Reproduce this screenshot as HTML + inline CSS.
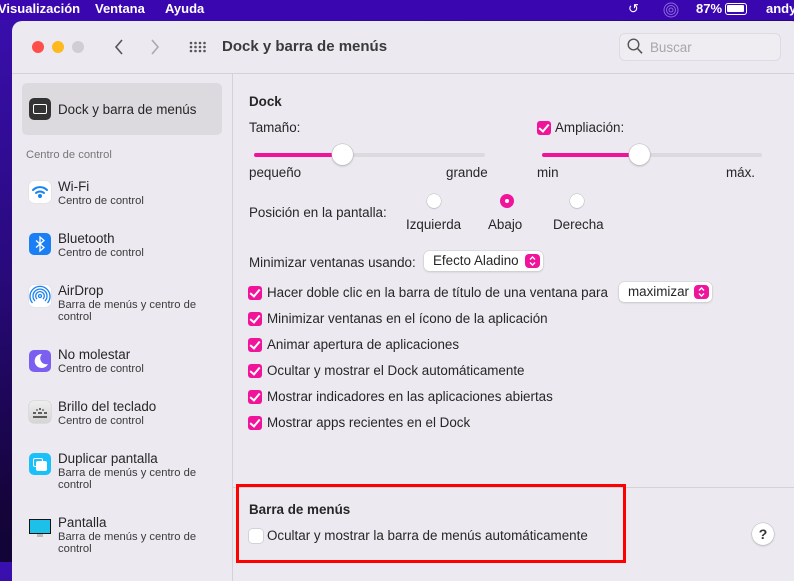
<!DOCTYPE html>
<html><head><meta charset="utf-8"><style>
*{margin:0;padding:0;box-sizing:border-box}
body{width:794px;height:562px;overflow:hidden;position:relative;font-family:"Liberation Sans",sans-serif;font-size:13.4px;color:#262626;background:linear-gradient(160deg,#3a0fb0 0%,#2a0a80 30%,#14043a 60%,#0a0220 100%)}
.a{position:absolute;white-space:nowrap}
.menubar{position:absolute;left:0;top:0;width:794px;height:20px;background:#3a06b0;color:#fff;font-size:13px;font-weight:bold}
.win{position:absolute;left:12px;top:21px;width:790px;height:560px;background:#ece9f0;border-radius:10px 10px 0 0;overflow:hidden}
.cb{position:absolute;width:14px;height:14px;border-radius:3px;background:#f0149a}
.cb::after{content:"";position:absolute;left:4px;top:1px;width:4px;height:8px;border:solid #fff;border-width:0 2px 2px 0;transform:rotate(40deg)}
.ic{position:absolute;left:17px;width:22px;height:22px;border-radius:5px}
.t1{position:absolute;left:46px;font-size:13.4px;color:#262626}
.t2{position:absolute;left:46px;font-size:11.2px;color:#3a3a3a;line-height:12px}
.pop{position:absolute;height:20px;background:#fff;border-radius:5px;box-shadow:0 0 0 .5px #ccc,0 1px 2px rgba(0,0,0,.15);padding:0 0 0 9px;line-height:20px}
.pop i{position:absolute;right:3px;top:3px;width:15px;height:14px;background:#f0149a;border-radius:4px}
.radio{position:absolute;width:14px;height:14px;border-radius:50%;background:#fff;box-shadow:0 0 0 .5px #bbb,0 1px 1px rgba(0,0,0,.15)}
</style></head><body>
<div class="menubar">
<span class="a" style="left:-2px;top:1px">Visualización</span>
<span class="a" style="left:95px;top:1px">Ventana</span>
<span class="a" style="left:165px;top:1px">Ayuda</span>
<span class="a" style="left:628px;top:1px;font-weight:normal">&#8634;</span>
<svg class="a" style="left:663px;top:2px" width="16" height="16" viewBox="0 0 16 16" fill="none" stroke="#8a6ad8" stroke-width="1"><circle cx="8" cy="8" r="2"/><circle cx="8" cy="8" r="4.5"/><circle cx="8" cy="8" r="7"/></svg>
<span class="a" style="left:696px;top:1px">87%</span>
<span class="a" style="left:725px;top:3px;width:22px;height:12px;border:1.5px solid #fff;border-radius:3px"><span style="position:absolute;left:1px;top:1px;width:17px;height:7px;background:#fff;border-radius:1px"></span></span>
<span class="a" style="left:766px;top:1px">andy</span>
</div>
<div class="win">
<div class="a" style="left:20px;top:20px;width:12px;height:12px;border-radius:50%;background:#fe4f4b"></div>
<div class="a" style="left:40px;top:20px;width:12px;height:12px;border-radius:50%;background:#fdb91e"></div>
<div class="a" style="left:60px;top:20px;width:12px;height:12px;border-radius:50%;background:#d0ced4"></div>
<svg class="a" style="left:102px;top:18px" width="10" height="16" viewBox="0 0 10 16"><path d="M8 1L2 8l6 7" fill="none" stroke="#555" stroke-width="1.6"/></svg>
<svg class="a" style="left:138px;top:18px" width="10" height="16" viewBox="0 0 10 16"><path d="M2 1l6 7-6 7" fill="none" stroke="#aaa" stroke-width="1.6"/></svg>
<svg class="a" style="left:177px;top:20px" width="18" height="12" viewBox="0 0 18 12" fill="#555"><circle cx="2" cy="2" r="1.3"/><circle cx="6.5" cy="2" r="1.3"/><circle cx="11" cy="2" r="1.3"/><circle cx="15.5" cy="2" r="1.3"/><circle cx="2" cy="6" r="1.3"/><circle cx="6.5" cy="6" r="1.3"/><circle cx="11" cy="6" r="1.3"/><circle cx="15.5" cy="6" r="1.3"/><circle cx="2" cy="10" r="1.3"/><circle cx="6.5" cy="10" r="1.3"/><circle cx="11" cy="10" r="1.3"/><circle cx="15.5" cy="10" r="1.3"/></svg>
<span class="a" style="left:210px;top:17px;font-size:15px;font-weight:bold;color:#3a3a3a">Dock y barra de menús</span>
<div class="a" style="left:607px;top:12px;width:162px;height:28px;border:1px solid #dedbe2;border-radius:6px;background:#efecf2"></div>
<svg class="a" style="left:615px;top:17px" width="16" height="17" viewBox="0 0 16 17"><circle cx="6.5" cy="6.5" r="5.3" fill="none" stroke="#555" stroke-width="1.4"/><path d="M10.5 10.5l4.5 4.8" stroke="#555" stroke-width="1.6"/></svg>
<span class="a" style="left:638px;top:19px;color:#a8a6ab">Buscar</span>
<div class="a" style="left:0;top:52px;width:790px;height:1px;background:#d4d1d8"></div>
<div class="a" style="left:220px;top:53px;width:1px;height:510px;background:#d4d1d8"></div>
<div class="a" style="left:10px;top:62px;width:200px;height:52px;background:#dcdadf;border-radius:5px"></div>
<div class="ic" style="top:77px;background:#333;left:17px"><div style="position:absolute;left:4px;top:6px;width:14px;height:10px;border:1.5px solid #fff;border-radius:2px"></div></div>
<span class="t1" style="top:81px">Dock y barra de menús</span>
<span class="a" style="left:14px;top:128px;font-size:11.2px;color:#777">Centro de control</span>

<div class="ic" style="top:160px;background:#fff;box-shadow:0 0 0 .5px #ddd"><svg width="22" height="22" viewBox="0 0 22 22" fill="none" stroke="#1a82f0" stroke-width="2" stroke-linecap="round"><path d="M4 9a10 10 0 0 1 14 0"/><path d="M7 12a6 6 0 0 1 8 0"/><circle cx="11" cy="15" r="1" fill="#1a82f0"/></svg></div>
<span class="t1" style="top:158px">Wi-Fi</span><span class="t2" style="top:174px">Centro de control</span>

<div class="ic" style="top:212px;background:#1a7ff5"><svg width="22" height="22" viewBox="0 0 22 22" fill="none" stroke="#fff" stroke-width="1.3"><path d="M7 7.5l8 7-4 3.5V4l4 3.5-8 7"/></svg></div>
<span class="t1" style="top:210px">Bluetooth</span><span class="t2" style="top:226px">Centro de control</span>

<div class="ic" style="top:264px;background:#fff;box-shadow:0 0 0 .5px #ddd"><svg width="22" height="22" viewBox="0 0 22 22" fill="none" stroke="#1a82f0" stroke-width="1.3"><path d="M6 16a7 7 0 1 1 10 0"/><path d="M8 14a4.3 4.3 0 1 1 6 0"/><circle cx="11" cy="11" r="1.5"/><path d="M3.5 18a10 10 0 1 1 15 0"/></svg></div>
<span class="t1" style="top:262px">AirDrop</span><span class="t2" style="top:278px">Barra de menús y centro de<br>control</span>

<div class="ic" style="top:329px;background:#7a5ff0"><svg width="22" height="22" viewBox="0 0 22 22"><path d="M13 4a7 7 0 1 0 6 10 6 6 0 0 1-6-10z" fill="#fff"/></svg></div>
<span class="t1" style="top:326px">No molestar</span><span class="t2" style="top:342px">Centro de control</span>

<div class="ic" style="top:380px;background:linear-gradient(#eee,#d5d5d5);box-shadow:0 0 0 .5px #ccc"><svg width="22" height="22" viewBox="0 0 22 22" stroke="#333" stroke-width="1.4"><path d="M4 12h3M9 12h4M15 12h3M11 7v2M7.5 8.5l1 1M14.5 8.5l-1 1M4 16h14"/></svg></div>
<span class="t1" style="top:378px">Brillo del teclado</span><span class="t2" style="top:394px">Centro de control</span>

<div class="ic" style="top:432px;background:#1ac0fa"><div style="position:absolute;left:4px;top:5px;width:10px;height:9px;border:1.5px solid #fff;border-radius:2px"></div><div style="position:absolute;left:7px;top:8px;width:11px;height:10px;background:#fff;border-radius:2px"></div></div>
<span class="t1" style="top:430px">Duplicar pantalla</span><span class="t2" style="top:446px">Barra de menús y centro de<br>control</span>

<div class="a" style="left:17px;top:498px;width:22px;height:15px;background:#1cc0e8;border:1.5px solid #111"></div>
<div class="a" style="left:25px;top:513px;width:6px;height:3px;background:#bbb"></div>
<span class="t1" style="top:494px">Pantalla</span><span class="t2" style="top:510px">Barra de menús y centro de<br>control</span>

<span class="a" style="left:237px;top:73px;font-weight:bold">Dock</span>
<span class="a" style="left:237px;top:99px">Tamaño:</span>
<div class="a" style="left:242px;top:132px;width:231px;height:4px;background:#dcd9df;border-radius:2px"></div>
<div class="a" style="left:242px;top:132px;width:90px;height:4px;background:#f0149a;border-radius:2px"></div>
<div class="a" style="left:320px;top:123px;width:21px;height:21px;border-radius:50%;background:#fff;box-shadow:0 0 0 .5px #bbb,0 1px 2px rgba(0,0,0,.25)"></div>
<span class="a" style="left:237px;top:144px">pequeño</span>
<span class="a" style="left:434px;top:144px">grande</span>

<div class="cb" style="left:525px;top:100px"></div>
<span class="a" style="left:543px;top:99px">Ampliación:</span>
<div class="a" style="left:530px;top:132px;width:220px;height:4px;background:#dcd9df;border-radius:2px"></div>
<div class="a" style="left:530px;top:132px;width:97px;height:4px;background:#f0149a;border-radius:2px"></div>
<div class="a" style="left:617px;top:123px;width:21px;height:21px;border-radius:50%;background:#fff;box-shadow:0 0 0 .5px #bbb,0 1px 2px rgba(0,0,0,.25)"></div>
<span class="a" style="left:525px;top:144px">min</span>
<span class="a" style="left:714px;top:144px">máx.</span>

<span class="a" style="left:237px;top:184px">Posición en la pantalla:</span>
<div class="radio" style="left:415px;top:173px"></div>
<div class="radio" style="left:488px;top:173px;background:#f0149a;box-shadow:none"><div style="position:absolute;left:5px;top:5px;width:4px;height:4px;border-radius:50%;background:#fff"></div></div>
<div class="radio" style="left:558px;top:173px"></div>
<span class="a" style="left:394px;top:196px">Izquierda</span>
<span class="a" style="left:476px;top:196px">Abajo</span>
<span class="a" style="left:541px;top:196px">Derecha</span>

<span class="a" style="left:237px;top:234px">Minimizar ventanas usando:</span>
<div class="pop" style="left:412px;top:230px;width:119px">Efecto Aladino<i><svg width="15" height="14" viewBox="0 0 15 14" fill="none" stroke="#fff" stroke-width="1.4"><path d="M5 5.5l2.5-2.5 2.5 2.5M5 8.5l2.5 2.5 2.5-2.5"/></svg></i></div>

<div class="cb" style="left:236px;top:265px"></div><span class="a" style="left:255px;top:264px">Hacer doble clic en la barra de título de una ventana para</span>
<div class="pop" style="left:607px;top:261px;width:93px">maximizar<i><svg width="15" height="14" viewBox="0 0 15 14" fill="none" stroke="#fff" stroke-width="1.4"><path d="M5 5.5l2.5-2.5 2.5 2.5M5 8.5l2.5 2.5 2.5-2.5"/></svg></i></div>
<div class="cb" style="left:236px;top:291px"></div><span class="a" style="left:255px;top:290px">Minimizar ventanas en el ícono de la aplicación</span>
<div class="cb" style="left:236px;top:317px"></div><span class="a" style="left:255px;top:316px">Animar apertura de aplicaciones</span>
<div class="cb" style="left:236px;top:343px"></div><span class="a" style="left:255px;top:342px">Ocultar y mostrar el Dock automáticamente</span>
<div class="cb" style="left:236px;top:369px"></div><span class="a" style="left:255px;top:368px">Mostrar indicadores en las aplicaciones abiertas</span>
<div class="cb" style="left:236px;top:395px"></div><span class="a" style="left:255px;top:394px">Mostrar apps recientes en el Dock</span>

<div class="a" style="left:221px;top:466px;width:570px;height:1px;background:#d4d1d8"></div>
<span class="a" style="left:237px;top:481px;font-weight:bold">Barra de menús</span>
<div class="a" style="left:237px;top:508px;width:14px;height:14px;border-radius:3px;background:#fff;box-shadow:0 0 0 .5px #bbb"></div>
<span class="a" style="left:255px;top:507px">Ocultar y mostrar la barra de menús automáticamente</span>
<div class="a" style="left:740px;top:502px;width:22px;height:22px;border-radius:50%;background:#fff;box-shadow:0 0 0 .5px #bbb,0 1px 2px rgba(0,0,0,.2);text-align:center;line-height:22px;font-weight:bold;font-size:14px;color:#333">?</div>
<div class="a" style="left:224px;top:463px;width:390px;height:79px;border:3px solid #f00"></div>
</div>
</body></html>
